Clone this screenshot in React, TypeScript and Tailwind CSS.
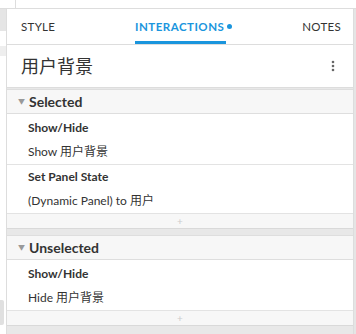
import React from "react";

const font = { fontFamily: "Lato, 'Noto Sans CJK SC', sans-serif" };

function Section({
  title,
  actions,
}: {
  title: string;
  actions: { name: string; detail: string }[];
}) {
  return (
    <div className="bg-white">
      <div className="h-[25px] flex items-center bg-[#f7f7f7] border-y border-[#dedede]">
        <span className="ml-[11px] mr-[4px] text-[7px] text-[#999] leading-none">▼</span>
        <span className="text-[14px] font-bold text-[#333]">{title}</span>
      </div>
      <div className="pt-[2px]">
        {actions.map((a, i) => (
          <div key={i} className={i > 0 ? "border-t border-[#e3e3e3]" : ""}>
            <div className="h-[24px] flex items-center pl-[21px] text-[12px] font-bold text-[#333]">
              {a.name}
            </div>
            <div className="h-[24px] flex items-center pl-[21px] text-[12px] text-[#333]">
              {a.detail}
            </div>
          </div>
        ))}
      </div>
      <div className="h-[16px] flex items-center justify-center bg-[#f7f7f7] border-t border-[#e3e3e3] border-b border-b-[#d9d9d9] text-[#ccc] text-[10px] leading-none">
        +
      </div>
    </div>
  );
}

export default function App() {
  return (
    <div className="w-[356px] h-[334px] bg-white overflow-hidden flex flex-col" style={font}>
      <div className="h-[8px] flex">
        <div className="w-[16px] border-r border-[#ddd]" />
      </div>
      <div className="flex flex-1 border-t border-[#ddd] min-h-0">
        <div className="w-[6px] flex flex-col">
          <div className="h-[22px] bg-[#e5e5e5]" />
          <div className="h-[15px]" />
          <div className="h-[10px] bg-[#eee]" />
          <div className="h-[244px]" />
          <div className="h-[25px] w-[4px] bg-[#e0e0e0] rounded-r-[2px]" />
        </div>
        <div className="w-[348px] flex flex-col border-x border-[#ddd] bg-[#e8e8e8]">
          <div className="h-[36px] flex items-stretch bg-white border-b border-[#ddd] text-[11.5px] tracking-[0.3px] text-[#333]">
            <div className="w-[128px] pl-[14px] flex items-center">STYLE</div>
            <div className="relative flex items-center text-[#1a95dd] font-bold tracking-[0.5px]">
              INTERACTIONS
              <span className="ml-[3px] w-[5px] h-[5px] rounded-full bg-[#1a95dd]" />
              <div className="absolute left-0 right-[6px] bottom-[0px] h-[3px] bg-[#1a95dd]" />
            </div>
            <div className="ml-auto pr-[12px] flex items-center">NOTES</div>
          </div>
          <div className="h-[43px] flex items-center justify-between bg-white border-b border-[#ddd] pl-[14px] pr-[18px]">
            <span className="text-[18px] text-[#333]">用户背景</span>
            <svg width="4" height="12" viewBox="0 0 4 12">
              <circle cx="2" cy="2" r="1.3" fill="#666" />
              <circle cx="2" cy="6" r="1.3" fill="#666" />
              <circle cx="2" cy="10" r="1.3" fill="#666" />
            </svg>
          </div>
          <div className="h-[1px]" />
          <Section
            title="Selected"
            actions={[
              { name: "Show/Hide", detail: "Show 用户背景" },
              { name: "Set Panel State", detail: "(Dynamic Panel) to 用户" },
            ]}
          />
          <div className="h-[6px]" />
          <Section
            title="Unselected"
            actions={[{ name: "Show/Hide", detail: "Hide 用户背景" }]}
          />
        </div>
        <div className="flex-1 bg-[#e5e5e5]" />
      </div>
    </div>
  );
}
